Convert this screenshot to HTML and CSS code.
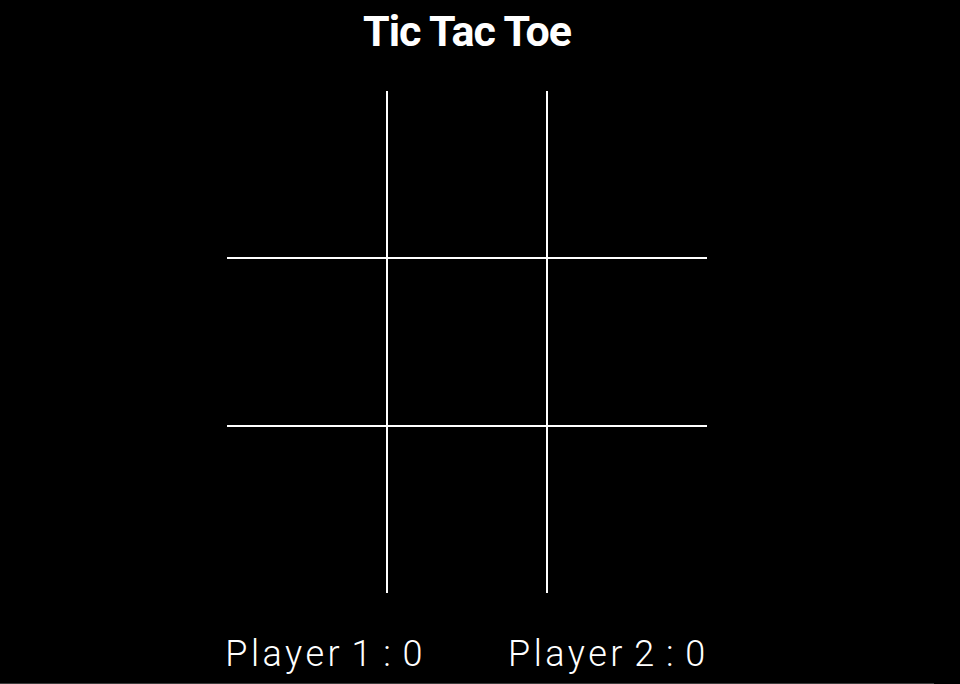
FILE: index.html
```html
<!DOCTYPE html>
<html lang="en">
<head>
  <meta charset="UTF-8" />
  <meta name="viewport" content="width=device-width, initial-scale=1.0">
  <title>Tic Tac Toe</title>
  <link rel="stylesheet" href="styles.css">
</head>
<body>
  <div class="page">
    <h1 class="title">Tic Tac Toe</h1>

    <div class="board">
      <div class="cell c-tl"></div>
      <div class="cell c-tm"></div>
      <div class="cell c-tr"></div>
      <div class="cell c-ml"></div>
      <div class="cell c-mm"></div>
      <div class="cell c-mr"></div>
      <div class="cell c-bl"></div>
      <div class="cell c-bm"></div>
      <div class="cell c-br"></div>
    </div>

    <div class="scores">
      <span class="score">Player 1 : <span id="score-1">0</span></span>
      <span class="score">Player 2 : <span id="score-2">0</span></span>
    </div>
  </div>
</body>
</html>
```

FILE: styles.css
```css
:root {
  --bg-color: #000;
  --text-color: #fff;
  --line-color: #fff;
}

html, body {
  margin: 0;
  padding: 0;
  background: var(--bg-color);
}

body {
  font-family: Roboto, "Liberation Sans", sans-serif;
  color: var(--text-color);
}

.page {
  width: 934px;
  height: 683px;
  border-bottom: 1px solid #3c3c3c;
  display: flex;
  flex-direction: column;
  align-items: center;
}

.title {
  margin: 6px 0 0;
  font-size: 43px;
  font-weight: 700;
  letter-spacing: -1px;
  line-height: 50px;
}

.board {
  margin-top: 35px;
  display: grid;
  grid-template-columns: 160px 160px 160px;
  grid-template-rows: 167px 168px 167px;
}

.cell {
  box-sizing: border-box;
  border: 0 solid var(--line-color);
}

.c-tl, .c-tm, .c-ml, .c-mm, .c-bl, .c-bm {
  border-right-width: 1px;
}

.c-tm, .c-tr, .c-mm, .c-mr, .c-bm, .c-br {
  border-left-width: 1px;
}

.c-tl, .c-tm, .c-tr, .c-ml, .c-mm, .c-mr {
  border-bottom-width: 1px;
}

.c-ml, .c-mm, .c-mr, .c-bl, .c-bm, .c-br {
  border-top-width: 1px;
}

.scores {
  margin-top: 41px;
  display: flex;
  gap: 82px;
}

.score {
  font-size: 36px;
  font-weight: 300;
  letter-spacing: 3.5px;
  word-spacing: -4px;
  line-height: 40px;
}
```
